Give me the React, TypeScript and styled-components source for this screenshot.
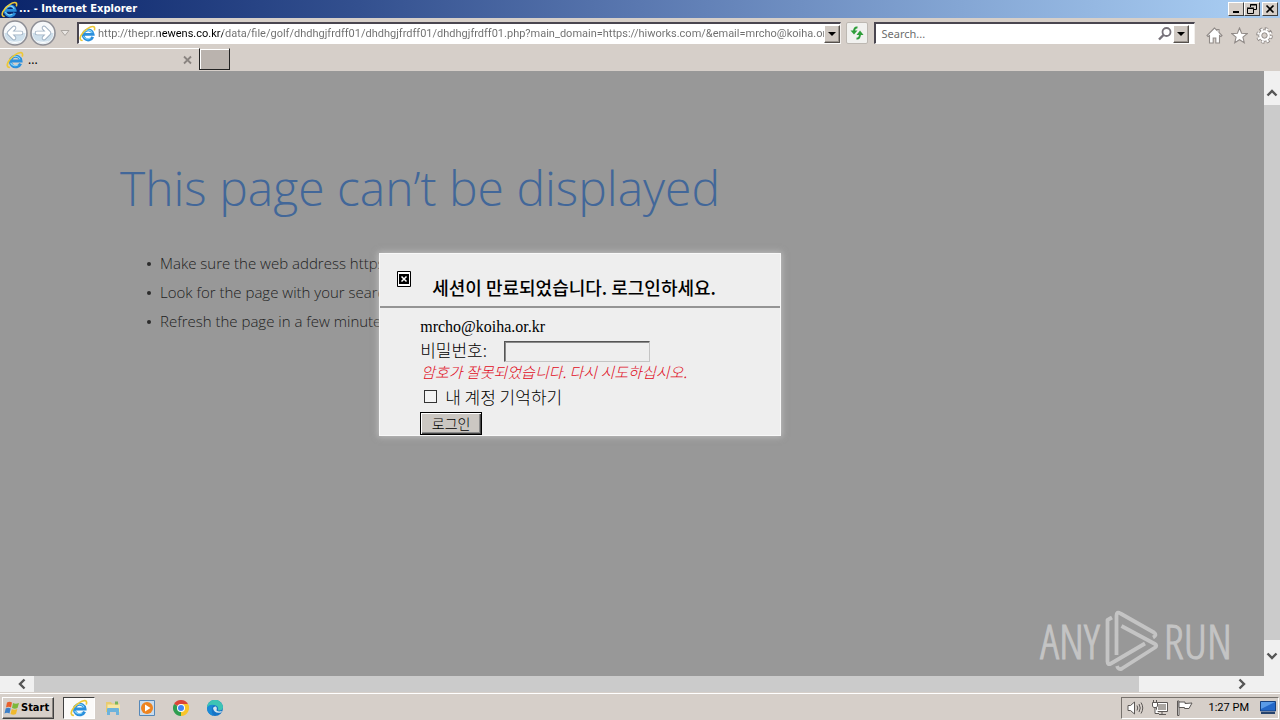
import React from "react";
import styled, { createGlobalStyle, css } from "styled-components";

const UI = `Roboto, "DejaVu Sans", sans-serif`;
const KR = `"Noto Sans CJK KR", sans-serif`;

const Global = createGlobalStyle`
  * { box-sizing: border-box; }
  html, body, #root { height: 100%; margin: 0; }
  body { background: #d6cfc9; font-family: ${UI}; overflow: hidden; }
  button, input { font: inherit; margin: 0; padding: 0; }
  svg { display: block; flex: none; }
`;

const Desktop = styled.div`
  display: flex;
  flex-direction: column;
  min-height: 100vh;
`;

/* ---------- window frame ---------- */
const TitleBar = styled.header`
  display: flex;
  align-items: center;
  height: 18px;
  padding: 0 2px 0 1px;
  gap: 1px;
  background: linear-gradient(90deg, #0a246a 0%, #33508f 28%, #5a78b0 50%, #84a6d4 75%, #a6caf0 96%);
`;
const TitleText = styled.h1`
  flex: 1;
  margin: 0;
  color: #fff;
  font: bold 11px/18px "DejaVu Sans Condensed", "DejaVu Sans", sans-serif;
`;
const CaptionButtons = styled.div`
  display: flex;
`;
const CaptionButton = styled.button<{ $gap?: boolean }>`
  display: flex;
  align-items: center;
  justify-content: center;
  width: 16px;
  height: 14px;
  margin-left: ${(p) => (p.$gap ? 2 : 0)}px;
  background: #d6cfc9;
  border: 1px solid;
  border-color: #fff #404040 #404040 #fff;
  color: #000;
`;

const NavBar = styled.nav`
  display: flex;
  align-items: center;
  height: 30px;
  padding: 0 7px 0 2px;
`;
const HistoryButtons = styled.div`
  display: flex;
  align-items: center;
  width: 75px;
  gap: 2px;
`;
const PlainButton = styled.button`
  display: flex;
  align-items: center;
  justify-content: center;
  background: none;
  border: 0;
`;
const Field = styled.div<{ $grow: number }>`
  display: flex;
  align-items: center;
  flex: ${(p) => p.$grow} 1 0;
  min-width: 0;
  height: 22px;
  background: #fff;
  border: 2px solid;
  border-color: #4a4650 #f2efec #fff #4a4650;
  border-bottom-width: 1px;
  border-right-width: 1px;
`;
const AddressInput = styled.input`
  flex: 1;
  min-width: 0;
  height: 18px;
  margin-left: 2px;
  border: 0;
  outline: 0;
  color: #6d6d6d;
  font: 11px/18px ${UI};
  background: linear-gradient(90deg, #6d6d6d 61px, #000 61px, #000 125px, #6d6d6d 125px);
  background-clip: text;
  -webkit-background-clip: text;
  -webkit-text-fill-color: transparent;
`;
const SearchInput = styled.input`
  flex: 1;
  min-width: 0;
  height: 18px;
  padding-left: 5px;
  border: 0;
  outline: 0;
  background: transparent;
  font: 11px/18px "Noto Sans", sans-serif;
  &::placeholder { color: #6d6d6d; opacity: 1; }
`;
const DropButton = styled.button`
  display: flex;
  align-items: center;
  justify-content: center;
  width: 16px;
  height: 18px;
  background: #d0c9c3;
  border: 1px solid;
  border-color: #fff #55504c #55504c #fff;
  box-shadow: inset -1px -1px #9a948e;
`;
const RefreshButton = styled.button`
  display: flex;
  align-items: center;
  justify-content: center;
  width: 22px;
  height: 22px;
  margin: 0 6px 0 5px;
  background: #f1f1ef;
  border: 1px solid #bdb8b2;
  border-radius: 2px;
`;
const SearchGap = styled.div`
  width: 5px;
`;
const ToolIcons = styled.div`
  display: flex;
  gap: 8px;
  margin-left: 11px;
  padding-top: 4px;
`;

const TabRow = styled.div`
  display: flex;
  height: 23px;
  align-items: flex-start;
`;
const Tab = styled.div`
  display: flex;
  align-items: center;
  width: 199px;
  height: 23px;
  padding: 0 6px 0 6px;
  gap: 4px;
  border-top: 1px solid #fff;
  color: #000;
  font: 12px/20px "Noto Sans", sans-serif;
`;
const TabTitle = styled.span`
  flex: 1;
`;
const NewTab = styled.button`
  width: 31px;
  height: 22px;
  background: #bab3ae;
  border: 1px solid;
  border-color: #d6cfc9 #222 #222 #222;
  box-shadow: inset 1px 1px #fff;
`;

/* ---------- page ---------- */
const Viewport = styled.div`
  flex: 1;
  display: grid;
  grid-template: 1fr 16px / 1fr 16px;
`;
const Page = styled.main`
  position: relative;
  background: #989898;
  padding: 86px 0 0 120px;
  overflow: hidden;
  font-family: "Open Sans", sans-serif;
  font-weight: 300;
`;
const ErrorTitle = styled.h2`
  margin: 0;
  color: #426799;
  font-size: 48px;
  font-weight: 300;
  line-height: 62px;
  white-space: nowrap;
`;
const Tips = styled.ul`
  margin: 30px 0 0;
  padding: 0 0 0 40px;
  list-style: none;
  color: #222;
  font-size: 15px;
  line-height: 29px;
`;
const Tip = styled.li`
  position: relative;
  white-space: nowrap;
  &::before {
    content: "";
    position: absolute;
    left: -13px;
    top: 13px;
    width: 4px;
    height: 4px;
    border-radius: 50%;
    background: #2b2b2b;
  }
`;
const Watermark = styled.div`
  position: absolute;
  right: 32px;
  bottom: 3px;
  display: flex;
  align-items: center;
  gap: 4px;
  color: #c4c4c4;
  font: 300 47px/64px "Open Sans Condensed Light", "Roboto Condensed", sans-serif;
  -webkit-text-stroke: 1px #c4c4c4;
`;

const ScrollBar = styled.div<{ $vertical?: boolean }>`
  display: flex;
  background: #f0f0f0;
  ${(p) => (p.$vertical ? css`flex-direction: column;` : css`padding-right: 12px;`)}
`;
const ScrollButton = styled.button<{ $long: number; $vertical?: boolean; $far?: boolean }>`
  display: flex;
  align-items: ${(p) => (p.$vertical && p.$far ? "flex-start" : "center")};
  justify-content: center;
  width: ${(p) => (p.$vertical ? 16 : p.$long)}px;
  height: ${(p) => (p.$vertical ? p.$long : 16)}px;
  padding: ${(p) => (p.$vertical ? "10px 0 0" : p.$far ? "0 0 0 2px" : "0 0 0 9px")};
  background: none;
  border: 0;
`;
const Thumb = styled.div<{ $grow: number }>`
  flex: ${(p) => p.$grow};
  background: #cbcbcb;
`;
const Track = styled.div<{ $grow: number }>`
  flex: ${(p) => p.$grow};
`;

/* ---------- login dialog ---------- */
const Dialog = styled.section`
  position: absolute;
  left: 30%;
  top: 30%;
  width: 402px;
  background: #eee;
  border: 1px solid #f8f8f8;
  box-shadow: 0 0 6px 1px rgba(225, 225, 225, 0.5);
  color: #000;
  font: 16px/20px ${KR};
`;
const DialogHeader = styled.div`
  display: flex;
  align-items: flex-start;
  gap: 21px;
  height: 54px;
  padding: 17px 0 0 17px;
  border-bottom: 2px solid #949494;
`;
const DialogTitle = styled.h3`
  margin: 4px 0 0;
  font: 500 18px/24px ${KR};
  white-space: nowrap;
`;
const LoginForm = styled.form`
  display: flex;
  flex-direction: column;
  align-items: flex-start;
  padding: 9px 0 0 40px;
`;
const Email = styled.div`
  font: 16px/20px "Liberation Serif", serif;
`;
const PasswordRow = styled.div`
  display: flex;
  align-items: center;
  gap: 12px;
  height: 25px;
  padding-top: 4px;
`;
const FieldLabel = styled.label`
  width: 72px;
  padding-bottom: 2px;
  font: 300 17px/20px ${KR};
  white-space: nowrap;
`;
const PasswordInput = styled.input`
  width: 146px;
  height: 21px;
  background: #eee;
  border: 1px solid;
  border-color: #555 #c4c4c4 #c4c4c4 #555;
  box-shadow: inset 1px 1px #8a8a8a;
  outline: 0;
`;
const ErrorText = styled.p`
  margin: 0 0 0 1px;
  color: #e00c1c;
  font: italic 300 15px/20px ${KR};
  white-space: nowrap;
`;
const RememberRow = styled.label`
  display: flex;
  align-items: center;
  gap: 8px;
  height: 30px;
  padding-left: 4px;
  font: 300 17px/20px ${KR};
  white-space: nowrap;
`;
const CheckBox = styled.input`
  appearance: none;
  width: 13px;
  height: 13px;
  border: 1px solid #333;
  background: #f4f4f4;
  &:checked { background: #333; }
`;
const LoginButton = styled.button`
  width: 62px;
  height: 23px;
  background: #cbc7c2;
  border: 1px solid #000;
  box-shadow: inset 1px 1px #fff, inset -1px -1px #444, inset -2px -2px #8a8a8a;
  color: #000;
  font: 300 14px/20px ${KR};
`;

/* ---------- taskbar ---------- */
const TaskBar = styled.footer`
  display: flex;
  align-items: center;
  height: 28px;
  padding: 2px 1px 0 2px;
  border-top: 1px solid #d6cfc9;
  box-shadow: inset 0 1px #fff;
`;
const StartButton = styled.button`
  display: flex;
  align-items: center;
  gap: 1px;
  width: 52px;
  height: 22px;
  padding-left: 1px;
  background: #d6cfc9;
  border: 1px solid;
  border-color: #fff #404040 #404040 #fff;
  box-shadow: inset -1px -1px #8a8580;
  color: #000;
  font: bold 11px/18px "DejaVu Sans Condensed", "DejaVu Sans", sans-serif;
`;
const QuickLaunch = styled.div`
  display: flex;
  flex: 1;
  margin-left: 9px;
  gap: 2px;
`;
const TaskButton = styled.button<{ $active?: boolean }>`
  display: flex;
  align-items: center;
  justify-content: center;
  width: 32px;
  height: 22px;
  border: 1px solid transparent;
  background: none;
  ${(p) =>
    p.$active &&
    css`
      background: #fbfaf9;
      border-color: #404040 #fff #fff #404040;
    `}
`;
const Tray = styled.div`
  display: flex;
  align-items: center;
  height: 22px;
  padding: 0 2px 0 5px;
  gap: 8px;
  border: 1px solid;
  border-color: #77726d #fff #fff #77726d;
  color: #000;
  font: 11px/20px ${UI};
`;
const Clock = styled.time`
  margin: 0 3px 0 8px;
`;

/* ---------- drawings ---------- */
const IEIcon = ({ size = 18 }: { size?: number }) => (
  <svg width={size} height={size} viewBox="0 0 18 18" aria-hidden="true">
    <path d="M14.6 12.600A5.300 5.300 0 1 1 15 10H6" fill="none" stroke="#2a8fdc" strokeWidth="3" />
    <path d="M14 8.400A4.900 4.900 0 0 0 4.800 8.400M4.600 11.800A5 5 0 0 0 12 13.800" fill="none" stroke="#8ad8fa" strokeWidth="1.100" />
    <path d="M3.200 16.400C-1.500 15.800 3 7.600 8.600 4.100 13 1.200 17.600.2 16.400 5" fill="none" stroke="#ecc838" strokeWidth="1.700" strokeLinecap="round" />
  </svg>
);

const RoundArrow = ({ flip }: { flip?: boolean }) => (
  <svg width="26" height="28" viewBox="0 0 26 28" aria-hidden="true">
    <circle cx="13" cy="14" r="12" fill="#f6f8fa" stroke="#8e8f96" strokeWidth="1.600" />
    <path d="M2.500 14a10.500 10.500 0 0 0 21 0Z" fill="#cfe0ec" />
    <path d="M6 21.500q7 5 14 0-7 2.500-14 0Z" fill="#fff" />
    <g transform={flip ? "matrix(-1 0 0 1 26 0)" : undefined} strokeLinecap="round" strokeLinejoin="round" fill="none">
      <path d="M12 9 7 14l5 5M7.500 14H19" stroke="#9fb0c2" strokeWidth="4.600" />
      <path d="M12 9 7 14l5 5M7.500 14H19" stroke="#fff" strokeWidth="2.800" />
    </g>
  </svg>
);

const Triangle = () => (
  <svg width="8" height="4" viewBox="0 0 8 4" aria-hidden="true"><path d="M0 0h8L4 4Z" fill="#000" /></svg>
);

const Chevron = ({ turn }: { turn: number }) => (
  <svg width="12" height="12" viewBox="0 0 12 12" aria-hidden="true">
    <path d="M1.500 8.500 6 4l4.500 4.500" transform={`rotate(${turn} 6 6)`} fill="none" stroke="#555" strokeWidth="2.400" />
  </svg>
);

const PlayLogo = () => (
  <svg width="56" height="64" viewBox="0 0 56 64" fill="none" stroke="#c4c4c4" strokeWidth="3.800" strokeLinejoin="round" aria-hidden="true">
    <path d="M8 8.500 3.500 11V52.500Q3.500 56.500 7 54.500L41 34.500" />
    <path d="M12.500 46V6.500Q12.500 2 16.500 4.500L50 23.500Q53.500 26 49 28.500" />
    <path d="M17.500 17 51 35Q53.500 36.500 51 38.500L18 59.500Q14.500 61.500 13 57" />
  </svg>
);

export default function App() {
  return (
    <>
      <Global />
      <Desktop>
        <TitleBar>
          <IEIcon size={17} />
          <TitleText>... - Internet Explorer</TitleText>
          <CaptionButtons>
            <CaptionButton aria-label="Minimize">
              <svg width="10" height="10" viewBox="0 0 10 10"><path d="M2 8h6" stroke="#000" strokeWidth="2" /></svg>
            </CaptionButton>
            <CaptionButton aria-label="Restore">
              <svg width="10" height="10" viewBox="0 0 10 10" fill="none" stroke="#000"><path d="M3.500 3V.5h6v5H7M3 1h7M.5 4.500h6v5h-6ZM0 4h7" /></svg>
            </CaptionButton>
            <CaptionButton aria-label="Close" $gap>
              <svg width="10" height="10" viewBox="0 0 10 10"><path d="m1.500 1.500 7 7m0-7-7 7" stroke="#000" strokeWidth="1.700" /></svg>
            </CaptionButton>
          </CaptionButtons>
        </TitleBar>

        <NavBar>
          <HistoryButtons>
            <PlainButton aria-label="Back"><RoundArrow /></PlainButton>
            <PlainButton aria-label="Forward"><RoundArrow flip /></PlainButton>
            <PlainButton aria-label="Recent pages">
              <svg width="16" height="10" viewBox="0 0 16 10"><path d="M3 2.500h8l-4 5Z" fill="#e9e6e3" stroke="#aaa5a0" /></svg>
            </PlainButton>
          </HistoryButtons>
          <Field $grow={765}>
            <IEIcon size={17} />
            <AddressInput
              aria-label="Address"
              defaultValue="http://thepr.newens.co.kr/data/file/golf/dhdhgjfrdff01/dhdhgjfrdff01/dhdhgjfrdff01.php?main_domain=https://hiworks.com/&email=mrcho@koiha.or"
            />
            <DropButton aria-label="Show addresses"><Triangle /></DropButton>
          </Field>
          <RefreshButton aria-label="Refresh">
            <svg width="16" height="16" viewBox="0 0 16 16" fill="none" stroke="#2e9e3a" strokeWidth="2">
              <path d="M8.500 2.500Q5 2 5 7" /><path d="M1.500 5.500h7L5 9.500Z" fill="#2e9e3a" stroke="none" />
              <path d="M7.500 13.500Q11 14 11 9" /><path d="M7.500 10h7L11 5.500Z" fill="#2e9e3a" stroke="none" />
            </svg>
          </RefreshButton>
          <Field $grow={319}>
            <SearchInput aria-label="Search" placeholder="Search..." />
            <PlainButton aria-label="Go">
              <svg width="16" height="16" viewBox="0 0 16 16" fill="none" stroke="#77727a" strokeWidth="1.800">
                <circle cx="9.500" cy="6" r="4" /><path d="M6.500 9 2 13.500" strokeWidth="2.400" />
              </svg>
            </PlainButton>
            <DropButton aria-label="Search options"><Triangle /></DropButton>
            <SearchGap />
          </Field>
          <ToolIcons>
            <PlainButton aria-label="Home">
              <svg width="17" height="17" viewBox="0 0 17 17" fill="#fff" stroke="#918b88" strokeWidth="1.100">
                <path d="M8.500 1 1 8.500l1 1 1.500-1V16h3.700v-5h2.600v5h3.700V8.500l1.500 1 1-1-3-3V2.500h-2v1Z" />
              </svg>
            </PlainButton>
            <PlainButton aria-label="Favorites">
              <svg width="17" height="17" viewBox="0 0 17 17" fill="#fff" stroke="#918b88" strokeWidth="1.100">
                <path d="m8.500 1 2.100 5.200 5.600.4-4.300 3.600 1.400 5.500-4.800-3-4.800 3 1.400-5.500L.8 6.600l5.600-.4Z" />
              </svg>
            </PlainButton>
            <PlainButton aria-label="Tools">
              <svg width="17" height="17" viewBox="0 0 17 17">
                <circle cx="8.500" cy="8.500" r="6.800" fill="none" stroke="#918b88" strokeWidth="3" strokeDasharray="3.200 2.140" />
                <circle cx="8.500" cy="8.500" r="5.800" fill="#fff" stroke="#918b88" strokeWidth="1" />
                <circle cx="8.500" cy="8.500" r="6.300" fill="none" stroke="#fff" strokeWidth="2.200" strokeDasharray="2 2.950" strokeDashoffset="-.5" />
                <circle cx="8.500" cy="8.500" r="2.700" fill="#d6cfc9" stroke="#918b88" />
              </svg>
            </PlainButton>
          </ToolIcons>
        </NavBar>

        <TabRow>
          <Tab>
            <IEIcon />
            <TabTitle>...</TabTitle>
            <PlainButton aria-label="Close tab">
              <svg width="11" height="10" viewBox="0 0 11 10"><path d="m2 1.500 7 7m0-7-7 7" stroke="#8a8480" strokeWidth="1.800" /></svg>
            </PlainButton>
          </Tab>
          <NewTab aria-label="New tab" />
        </TabRow>

        <Viewport>
          <Page>
            <ErrorTitle>This page can’t be displayed</ErrorTitle>
            <Tips>
              <Tip>Make sure the web address https</Tip>
              <Tip>Look for the page with your search</Tip>
              <Tip>Refresh the page in a few minutes.</Tip>
            </Tips>
            <Watermark>
              <span>ANY</span>
              <PlayLogo />
              <span>RUN</span>
            </Watermark>
            <Dialog aria-label="Login">
              <DialogHeader>
                <PlainButton aria-label="Close dialog">
                  <svg width="14" height="16" viewBox="0 0 14 16">
                    <path d="M.5.5h13v15H.5Z" fill="#fff" stroke="#000" />
                    <path d="M2 3h10v10H2Z" fill="#000" />
                    <path d="m4.500 5.500 5 5m0-5-5 5" stroke="#fff" strokeWidth="1.500" />
                  </svg>
                </PlainButton>
                <DialogTitle>세션이 만료되었습니다. 로그인하세요.</DialogTitle>
              </DialogHeader>
              <LoginForm onSubmit={(e) => e.preventDefault()}>
                <Email>mrcho@koiha.or.kr</Email>
                <PasswordRow>
                  <FieldLabel htmlFor="password">비밀번호:</FieldLabel>
                  <PasswordInput id="password" type="password" />
                </PasswordRow>
                <ErrorText>암호가 잘못되었습니다. 다시 시도하십시오.</ErrorText>
                <RememberRow>
                  <CheckBox type="checkbox" />
                  내 계정 기억하기
                </RememberRow>
                <LoginButton>로그인</LoginButton>
              </LoginForm>
            </Dialog>
          </Page>
          <ScrollBar $vertical>
            <ScrollButton $vertical $long={34} aria-label="Scroll up"><Chevron turn={0} /></ScrollButton>
            <Thumb $grow={535} />
            <ScrollButton $vertical $far $long={36} aria-label="Scroll down"><Chevron turn={180} /></ScrollButton>
          </ScrollBar>
          <ScrollBar>
            <ScrollButton $long={34} aria-label="Scroll left"><Chevron turn={-90} /></ScrollButton>
            <Thumb $grow={1105} />
            <Track $grow={91} />
            <ScrollButton $far $long={22} aria-label="Scroll right"><Chevron turn={90} /></ScrollButton>
          </ScrollBar>
          <ScrollBar />
        </Viewport>

        <TaskBar>
          <StartButton>
            <svg width="16" height="16" viewBox="0 0 16 16">
              <path d="M3 2.500Q5.500 1 8 2.500L7 7.500Q4.500 6 2 7.500Z" fill="#e8602c" />
              <path d="M9 3q2.500 1.500 6 0l-1.500 5Q11 9.500 8 8Z" fill="#7db83a" />
              <path d="M1.700 8.500Q4 7 6.700 8.500l-1.200 5Q3 12 .5 13.500Z" fill="#3c7fc8" />
              <path d="M7.800 9q2.500 1.500 5.500 0L12 14q-2.500 1.500-5.500 0Z" fill="#f0b92e" />
            </svg>
            Start
          </StartButton>
          <QuickLaunch>
            <TaskButton $active aria-label="Internet Explorer"><IEIcon /></TaskButton>
            <TaskButton aria-label="Explorer">
              <svg width="16" height="16" viewBox="0 0 16 16">
                <path d="M1 2h5l1 1.500h7V12H1Z" fill="#e8cb70" /><path d="M2.500 4.500H15V12H2.500Z" fill="#f6e6a4" />
                <path d="M2 15V9q0-1 1-1h10q1 0 1 1v6h-3v-3H5v3Z" fill="#6db3dc" /><path d="M10 1.500h3v3h-3Z" fill="#79b55a" />
              </svg>
            </TaskButton>
            <TaskButton aria-label="Media Player">
              <svg width="16" height="16" viewBox="0 0 16 16">
                <path d="M.5.5h15v15H.5Z" fill="#c9dcee" stroke="#5688b8" /><circle cx="8" cy="8" r="6" fill="#ee8420" /><path d="m6 4.500 5.500 3.500L6 11.500Z" fill="#fff" />
              </svg>
            </TaskButton>
            <TaskButton aria-label="Chrome">
              <svg width="16" height="16" viewBox="0 0 16 16">
                <path d="M8 8 1.070 4A8 8 0 0 1 14.930 4Z" fill="#dc4437" /><path d="M8 8 14.930 4A8 8 0 0 1 8 16Z" fill="#f9c52a" /><path d="M8 8v8A8 8 0 0 1 1.070 4Z" fill="#2f9e50" />
                <path d="M8 4h6.900q1.100 2 1.100 4h-4Z" fill="#f9c52a" /><circle cx="8" cy="8" r="4" fill="#fff" /><circle cx="8" cy="8" r="3" fill="#4285f4" />
              </svg>
            </TaskButton>
            <TaskButton aria-label="Edge">
              <svg width="16" height="16" viewBox="0 0 16 16">
                <circle cx="8" cy="8" r="8" fill="#1674c6" /><path d="M0 8A8 8 0 0 1 16 7.500Q15.500 11 11 10.500 12 5.500 7 5 2 5 0 8Z" fill="#3dc4b4" />
                <path d="M6 8q1-2 3-1.500 1.500 1 .5 4 2 1.500 5.500.5l-1 1.500Q7 14 6 8Z" fill="#d6e6ee" /><path d="M0 8q2-4 7-3Q3 8 6 15.700 0 14 0 8Z" fill="#1b8ad6" />
              </svg>
            </TaskButton>
          </QuickLaunch>
          <Tray>
            <svg width="17" height="16" viewBox="0 0 17 16" fill="#fff" stroke="#5c5856">
              <path d="M1 5.500h2.500L7.500 2v12L3.500 10.500H1Z" /><path d="M10 5.500q1.500 2.500 0 5M12 4q2.500 4 0 8M14 2.500q3.500 5.500 0 11" fill="none" />
            </svg>
            <svg width="16" height="16" viewBox="0 0 16 16" fill="#fff" stroke="#5c5856">
              <path d="M4.500 2.500h11v9h-11ZM10 11.500v3M7 14.500h7" /><path d="M6 4h8v6H6Z" fill="#aaa6a2" stroke="none" /><path d="M.5 2.500h5V6L4.500 7.500h-3L.5 6ZM3 7.500V13.500H7M1.500 0v2.500M4.500 0v2.500" />
            </svg>
            <svg width="17" height="16" viewBox="0 0 17 16" fill="#fff" stroke="#5c5856">
              <path d="M1.500 1v14.500h1.500V1Z" /><path d="M3 2h6v1.500l7-.500-3 5.500H8.500v-1H3Z" />
            </svg>
            <Clock>1:27 PM</Clock>
            <svg width="16" height="14" viewBox="0 0 16 14">
              <path d="M.5.5h15v9.500H.5Z" fill="#2468c8" stroke="#17417f" /><path d="M1 1h14L1 8Z" fill="#5a9be8" /><path d="M1 12h14" stroke="#26436c" strokeWidth="2" />
            </svg>
          </Tray>
        </TaskBar>
      </Desktop>
    </>
  );
}
